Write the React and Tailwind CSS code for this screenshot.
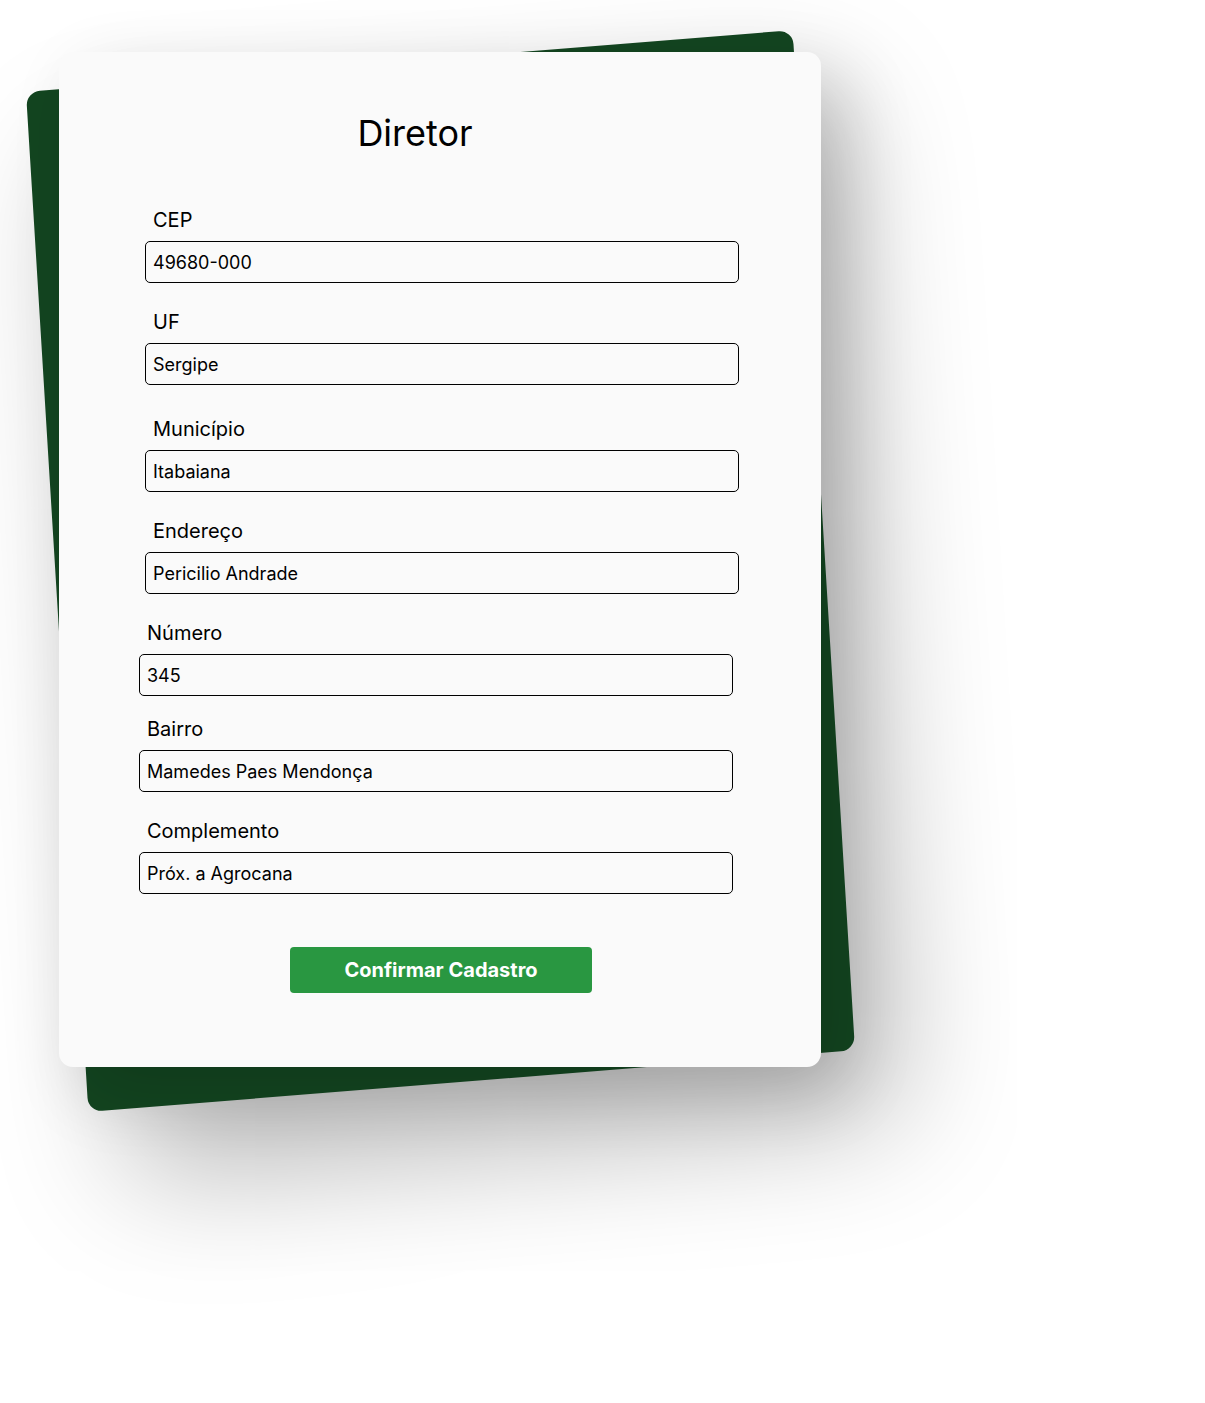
import React from 'react';

const FIRST_GROUP = [
  { label: 'CEP', value: '49680-000', gap: 'mb-[27px]' },
  { label: 'UF', value: 'Sergipe', gap: 'mb-[32px]' },
  { label: 'Município', value: 'Itabaiana', gap: 'mb-[27px]' },
  { label: 'Endereço', value: 'Pericilio Andrade', gap: 'mb-[27px]' },
];

const SECOND_GROUP = [
  { label: 'Número', value: '345', gap: 'mb-[21px]' },
  { label: 'Bairro', value: 'Mamedes Paes Mendonça', gap: 'mb-[27px]' },
  { label: 'Complemento', value: 'Próx. a Agrocana', gap: '' },
];

function Field({ label, value, gap }) {
  return (
    <div className={`flex flex-col ${gap}`}>
      <label className="pl-[8px] text-[20px] leading-[24px] text-black">{label}</label>
      <input
        readOnly
        value={value}
        className="mt-[9px] h-[42px] w-full rounded-[5px] border border-black bg-transparent px-[7px] text-[18px] text-black outline-none"
      />
    </div>
  );
}

export default function App() {
  return (
    <div className="min-h-[1403px] bg-white pl-[59px] pt-[52px] font-['Inter','Noto_Sans',sans-serif]">
      <div className="relative w-[762px]">
        {/* green sheet behind the form */}
        <div className="absolute left-[-3px] top-[8px] h-[1022px] w-[769px] -rotate-[4deg] skew-x-[-0.5deg] skew-y-[-0.6deg] rounded-[14px] bg-[#134520] shadow-[40px_70px_130px_rgba(0,0,0,0.28)]"></div>

        {/* form card */}
        <div className="relative flex flex-col rounded-[14px] bg-[#fafafa] pt-[61px] pb-[74px] shadow-[24px_24px_70px_rgba(0,0,0,0.16)]">
          <h1 className="pr-[50px] text-center text-[36px] leading-[40px] font-normal text-black">Diretor</h1>

          <div className="mt-[55px] flex flex-col pl-[86px] pr-[82px]">
            {FIRST_GROUP.map((f) => (
              <Field key={f.label} {...f} />
            ))}
          </div>

          <div className="flex flex-col pl-[80px] pr-[88px]">
            {SECOND_GROUP.map((f) => (
              <Field key={f.label} {...f} />
            ))}
          </div>

          <button className="mx-auto mt-[53px] h-[46px] w-[302px] translate-x-[1px] rounded-[4px] bg-[#299741] text-[20px] font-bold text-white">
            Confirmar Cadastro
          </button>
        </div>
      </div>
    </div>
  );
}
